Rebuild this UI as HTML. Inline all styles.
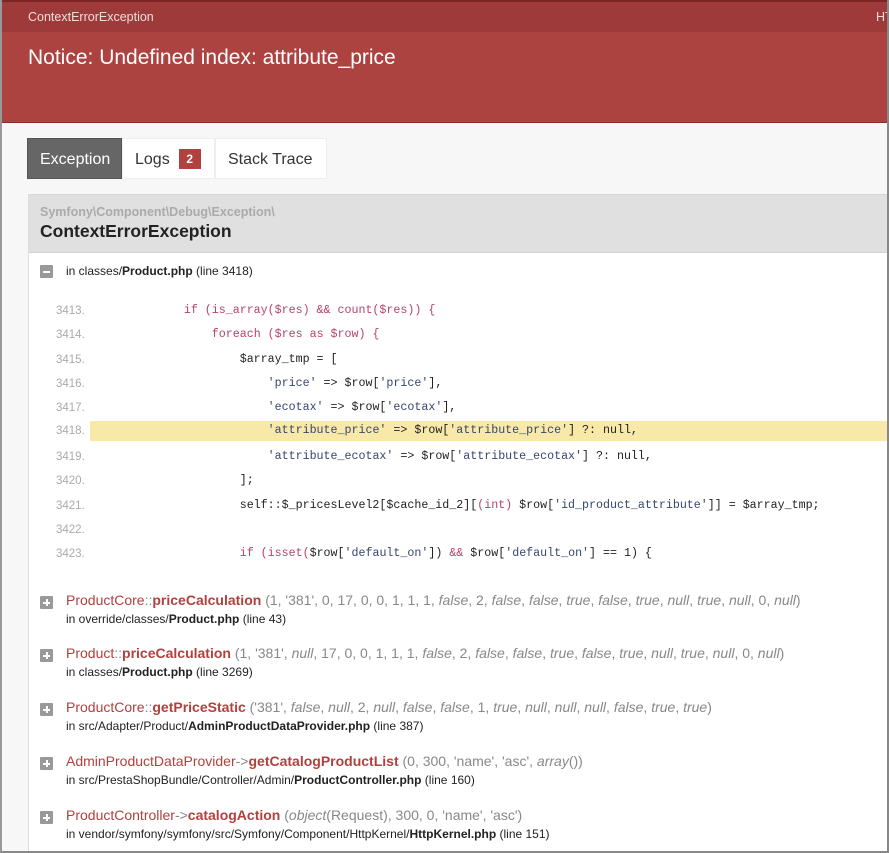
<!DOCTYPE html>
<html><head><meta charset="utf-8"><style>
*{margin:0;padding:0;box-sizing:border-box}
html,body{width:889px;height:853px;overflow:hidden;background:#f7f7f7;font-family:"Liberation Sans",Arial,sans-serif;color:#222}
.frame{position:absolute;left:0;top:0;width:889px;height:853px;border-left:2px solid #999;border-right:2px solid #888;border-bottom:2px solid #888}
.top{position:absolute;left:0;top:0;width:889px;height:32px;background:#9e3b3a;color:#f2dcdc;font-size:12.5px;border-top:2px solid #7d2424}
.top .l{position:absolute;left:28px;top:8px}
.top .r{position:absolute;left:876px;top:8px}
.hd{position:absolute;left:0;top:32px;width:889px;height:91px;background:#ad4340;border-bottom:1px solid #8a2e2c}
.hd h1{position:absolute;left:28px;top:14px;font-weight:normal;font-size:21px;color:#fff}
.tabs{position:absolute;left:27px;top:138px;height:41px;display:flex;font-size:16px}
.tab{height:41px;line-height:41px;padding:0 12px;background:#fff;border:1px solid #eee;color:#333}
.tab.on{background:#666;color:#fff;border-color:#555;width:95px}
.tab.lg{width:93px}
.tab.st{width:112px}
.badge{display:inline-block;background:#b0413e;color:#fff;font-size:12px;font-weight:bold;width:22px;height:20px;line-height:20px;text-align:center;margin-left:9px;vertical-align:1px}
.block{position:absolute;left:28px;top:194px;width:861px;height:657px;background:#fff;border-left:1px solid #ddd}
.bh{height:59px;background:#e0e0e0;border-top:1px solid #d6d6d6;border-bottom:1px solid #d4d4d4;padding:10px 0 0 11px}
.ns{font-size:12.5px;color:#aaa;font-weight:bold}
.cls{font-size:17.5px;font-weight:bold;color:#222;margin-top:2px}
.ic{position:absolute;width:13px;height:13px;background:#999;border-radius:1px}
.ic:before{content:"";position:absolute;left:3px;top:5.5px;width:7px;height:2px;background:#fff}
.ic.p:after{content:"";position:absolute;left:5.5px;top:3px;width:2px;height:7px;background:#fff}
.loc{position:absolute;left:37px;top:70px;font-size:12px;color:#222}
.code{position:absolute;left:0;top:106px;width:860px;font-family:"Liberation Mono",monospace;font-size:11.65px}
.ln{position:absolute;height:22px;line-height:22px;width:860px;white-space:pre;color:#222}
.ln .n{position:absolute;left:27px;color:#aaa;font-family:"Liberation Sans",sans-serif;font-size:11.5px}
.ln .c{position:absolute;left:71px}
.hl{background:#f8e9a8;left:61px!important;width:799px!important}
.k{color:#b8436a}.s{color:#37466e}
.tr{position:absolute;left:11px;font-size:14px;color:#b0413e}
.tr .ic{left:0;top:4px}
.tr .t{position:absolute;left:26px;top:0;white-space:nowrap}
.tr b{font-weight:bold}
.tr .a{color:#888}
.tr .f{position:absolute;left:26px;top:20px;font-size:12px;color:#222;white-space:nowrap}
</style></head><body>
<div class="top"><span class="l">ContextErrorException</span><span class="r">HT</span></div>
<div class="hd"><h1>Notice: Undefined index: attribute_price</h1></div>
<div class="tabs"><div class="tab on">Exception</div><div class="tab lg">Logs<span class="badge">2</span></div><div class="tab st">Stack Trace</div></div>
<div class="block">
<div class="bh"><div class="ns">Symfony\Component\Debug\Exception\</div><div class="cls">ContextErrorException</div></div>
<div class="ic" style="left:11px;top:71px"></div>
<div class="loc">in classes/<b>Product.php</b> (line 3418)</div>
<div class="code">
<div class="ln" style="top:0"><span class="n">3413.</span><span class="c">            <span class="k">if (is_array($res) &amp;&amp; count($res)) {</span></span></div>
<div class="ln" style="top:24px"><span class="n">3414.</span><span class="c">                <span class="k">foreach ($res as $row) {</span></span></div>
<div class="ln" style="top:48.5px"><span class="n">3415.</span><span class="c">                    $array_tmp = [</span></div>
<div class="ln" style="top:73px"><span class="n">3416.</span><span class="c">                        <span class="s">'price'</span> =&gt; $row[<span class="s">'price'</span>],</span></div>
<div class="ln" style="top:97px"><span class="n">3417.</span><span class="c">                        <span class="s">'ecotax'</span> =&gt; $row[<span class="s">'ecotax'</span>],</span></div>
<div class="ln hl" style="top:121px;height:20px;line-height:20px"><span class="n" style="left:-34px">3418.</span><span class="c" style="left:10px">                        <span class="s">'attribute_price'</span> =&gt; $row[<span class="s">'attribute_price'</span>] ?: null,</span></div>
<div class="ln" style="top:146px"><span class="n">3419.</span><span class="c">                        <span class="s">'attribute_ecotax'</span> =&gt; $row[<span class="s">'attribute_ecotax'</span>] ?: null,</span></div>
<div class="ln" style="top:170px"><span class="n">3420.</span><span class="c">                    ];</span></div>
<div class="ln" style="top:194.5px"><span class="n">3421.</span><span class="c">                    self::$_pricesLevel2[$cache_id_2][<span class="k">(int)</span> $row[<span class="s">'id_product_attribute'</span>]] = $array_tmp;</span></div>
<div class="ln" style="top:219px"><span class="n">3422.</span><span class="c"></span></div>
<div class="ln" style="top:243px"><span class="n">3423.</span><span class="c">                    <span class="k">if (isset(</span>$row[<span class="s">'default_on'</span>]) <span class="k">&amp;&amp;</span> $row[<span class="s">'default_on'</span>] == 1) {</span></div>
</div>
<div class="tr" style="top:398px"><div class="ic p"></div><div class="t">ProductCore<span class="a">::</span><b>priceCalculation</b> <span class="a">(1, '381', 0, 17, 0, 0, 1, 1, 1, <i>false</i>, 2, <i>false</i>, <i>false</i>, <i>true</i>, <i>false</i>, <i>true</i>, <i>null</i>, <i>true</i>, <i>null</i>, 0, <i>null</i>)</span></div><div class="f">in override/classes/<b>Product.php</b> (line 43)</div></div>
<div class="tr" style="top:451px"><div class="ic p"></div><div class="t">Product<span class="a">::</span><b>priceCalculation</b> <span class="a">(1, '381', <i>null</i>, 17, 0, 0, 1, 1, 1, <i>false</i>, 2, <i>false</i>, <i>false</i>, <i>true</i>, <i>false</i>, <i>true</i>, <i>null</i>, <i>true</i>, <i>null</i>, 0, <i>null</i>)</span></div><div class="f">in classes/<b>Product.php</b> (line 3269)</div></div>
<div class="tr" style="top:505px"><div class="ic p"></div><div class="t">ProductCore<span class="a">::</span><b>getPriceStatic</b> <span class="a">('381', <i>false</i>, <i>null</i>, 2, <i>null</i>, <i>false</i>, <i>false</i>, 1, <i>true</i>, <i>null</i>, <i>null</i>, <i>null</i>, <i>false</i>, <i>true</i>, <i>true</i>)</span></div><div class="f">in src/Adapter/Product/<b>AdminProductDataProvider.php</b> (line 387)</div></div>
<div class="tr" style="top:559px"><div class="ic p"></div><div class="t">AdminProductDataProvider<span class="a">-&gt;</span><b>getCatalogProductList</b> <span class="a">(0, 300, 'name', 'asc', <i>array</i>())</span></div><div class="f">in src/PrestaShopBundle/Controller/Admin/<b>ProductController.php</b> (line 160)</div></div>
<div class="tr" style="top:613px"><div class="ic p"></div><div class="t">ProductController<span class="a">-&gt;</span><b>catalogAction</b> <span class="a">(<i>object</i>(Request), 300, 0, 'name', 'asc')</span></div><div class="f">in vendor/symfony/symfony/src/Symfony/Component/HttpKernel/<b>HttpKernel.php</b> (line 151)</div></div>
</div>
<div class="frame"></div>
</body></html>
